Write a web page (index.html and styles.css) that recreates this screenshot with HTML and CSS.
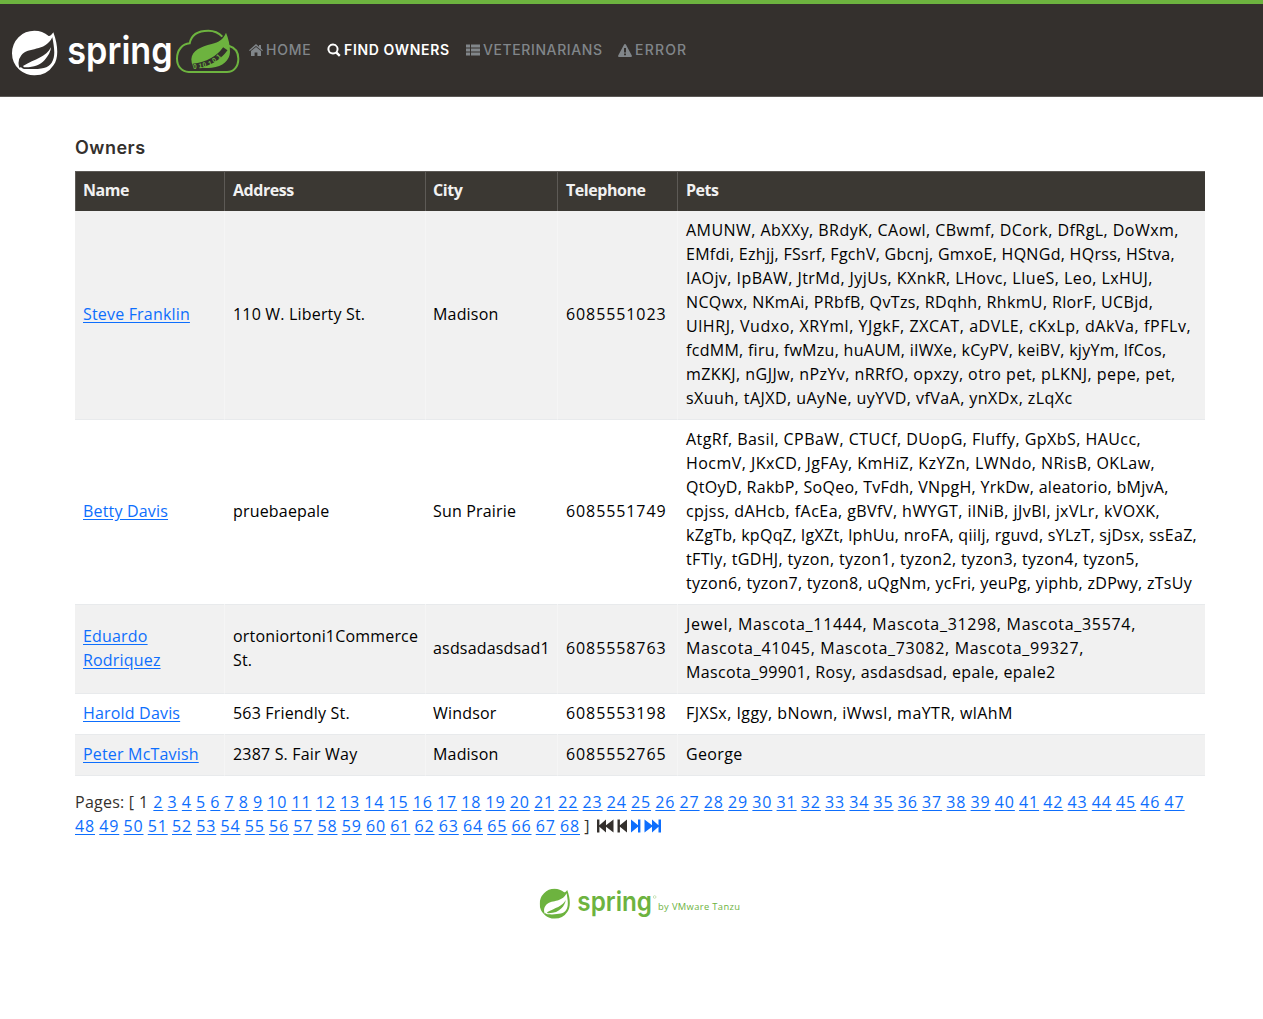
FILE: index.html
```html
<!DOCTYPE html>
<html lang="en">
<head>
<meta charset="utf-8">
<title>PetClinic :: a Spring Framework demonstration</title>
<link rel="stylesheet" href="styles.css">
</head>
<body>
<svg class="defs" aria-hidden="true">
  <symbol id="leaf" viewBox="0 0 138 138">
    <path fill-rule="evenodd" d="M124 7C119 14 114 19 110 18A67 67 0 0 0 67 2A67 67 0 0 0 0 69A67 67 0 0 0 20 117L24 121A67 67 0 0 0 67 136A68 68 0 0 0 125 105C139 86 140 50 124 7ZM121 22C126 50 132 78 119 98C107 117 80 118 36 117L31 115Q27 110 22 113Q15 92 28 76C49 49 98 68 121 22ZM117 52C103 82 70 86 33 108L36 112C64 113 84 105 98 90C109 78 116 65 117 52Z"/>
  </symbol>
</svg>
<nav class="navbar">
  <a class="brand" href="#">
    <svg width="229" height="50" viewBox="36 84 687 150">
      <use href="#leaf" x="36" y="90" width="138" height="138" fill="#fff"/>
      <text class="wordmark" x="202" y="191" font-size="114" textLength="316" lengthAdjust="spacingAndGlyphs" fill="#fff">spring</text>
      <path d="M686 137C704 142 715 156 715 176C715 200 701 216 681 216H566C546 216 531 199 531 176C531 150 547 132 569 130C574 103 596 92 625 92C646 92 657 99 667 110" fill="none" stroke="#6db33f" stroke-width="6"/>
      <path d="M678 98C669 119 657 126 635 132C603 140 576 151 574 178Q574 188 579 199Q607 207 635 203C669 200 689 181 690 156Q690 126 678 98Z" fill="#6db33f"/>
      <path d="M579 199Q645 190 676 146" fill="none" stroke="#34302d" stroke-width="16"/>
      <g class="bits" fill="#6db33f"><text x="579" y="206">0</text><text x="596" y="205" transform="rotate(-5 596 205)">1</text><text x="609" y="202" transform="rotate(-12 609 202)">0</text><text x="627" y="198" transform="rotate(-18 627 198)">1</text><text x="642" y="189" transform="rotate(-34 642 189)">0</text><text x="656" y="178" transform="rotate(-42 656 178)">1</text></g>
    </svg>
  </a>
  <ul class="menu">
    <li><a href="#"><svg width="14" height="12" viewBox="0 0 14 12"><path d="M7 0 10 2.7V1h2v3.5L14 6.2l-.8.9L7 1.9.8 7.1 0 6.2ZM7 3l5 4.1V12H8.4V8.500H5.600V12H2V7.100Z"/></svg><span class="n-home">HOME</span></a></li>
    <li><a href="#" class="active"><svg width="14" height="14" viewBox="0 0 14 14"><path fill-rule="evenodd" d="M6 .5a5.500 5.500 0 0 1 4.600 8.500l3 3-1.600 1.700-3.200-3A5.500 5.500 0 1 1 6 .5ZM6 2.400a3.600 3.600 0 1 0 0 7.200 3.600 3.600 0 0 0 0-7.200Z"/></svg><span class="n-find">FIND OWNERS</span></a></li>
    <li><a href="#"><svg width="14" height="12" viewBox="0 0 14 12"><path d="M0 .5h4v3H0Zm5 0h9v3H5ZM0 4.500h4v3H0Zm5 0h9v3H5ZM0 8.500h4v3H0Zm5 0h9v3H5Z"/></svg><span class="n-vets">VETERINARIANS</span></a></li>
    <li><a href="#"><svg width="14" height="13" viewBox="0 0 14 13"><path fill-rule="evenodd" d="M7 0q.6 0 .9.6L13.800 11.600q.4 1.400-.8 1.400H1Q-.2 13 .2 11.600L6.100.6Q6.400 0 7 0ZM6 4v4.500h2V4ZM6 9.500v1.800h2V9.500Z"/></svg><span class="n-error">ERROR</span></a></li>
  </ul>
</nav>
<main class="container">
  <h2>Owners</h2>
  <table class="owners">
    <colgroup><col class="c-name"><col class="c-address"><col class="c-city"><col class="c-phone"><col></colgroup>
    <thead><tr><th>Name</th><th>Address</th><th>City</th><th>Telephone</th><th>Pets</th></tr></thead>
    <tbody>
      <tr><td><a href="#">Steve Franklin</a></td><td>110 W. Liberty St.</td><td>Madison</td><td class="num">6085551023</td><td class="pets"><span class="m">AMUNW, AbXXy, BRdyK, CAowl, CBwmf, DCork, DfRgL, DoWxm,</span><br><span class="s">EMfdi, Ezhjj, FSsrf, FgchV, Gbcnj, GmxoE, HQNGd, HQrss, HStva,</span><br><span class="m">IAOjv, IpBAW, JtrMd, JyjUs, KXnkR, LHovc, LIueS, Leo, LxHUJ,</span><br>NCQwx, NKmAi, PRbfB, QvTzs, RDqhh, RhkmU, RlorF, UCBjd,<br><span class="l">UlHRJ, Vudxo, XRYml, YJgkF, ZXCAT, aDVLE, cKxLp, dAkVa, fPFLv,</span><br><span class="s">fcdMM, firu, fwMzu, huAUM, iIWXe, kCyPV, keiBV, kjyYm, lfCos,</span><br><span class="m">mZKKJ, nGJJw, nPzYv, nRRfO, opxzy, otro pet, pLKNJ, pepe, pet,</span><br><span class="m">sXuuh, tAJXD, uAyNe, uyYVD, vfVaA, ynXDx, zLqXc</span></td></tr>
      <tr><td><a href="#">Betty Davis</a></td><td>pruebaepale</td><td>Sun Prairie</td><td class="num">6085551749</td><td class="pets"><span class="m">AtgRf, Basil, CPBaW, CTUCf, DUopG, Fluffy, GpXbS, HAUcc,</span><br><span class="m">HocmV, JKxCD, JgFAy, KmHiZ, KzYZn, LWNdo, NRisB, OKLaw,</span><br><span class="s">QtOyD, RakbP, SoQeo, TvFdh, VNpgH, YrkDw, aleatorio, bMjvA,</span><br><span class="m">cpjss, dAHcb, fAcEa, gBVfV, hWYGT, ilNiB, jJvBl, jxVLr, kVOXK,</span><br><span class="s">kZgTb, kpQqZ, lgXZt, lphUu, nroFA, qiilj, rguvd, sYLzT, sjDsx, ssEaZ,</span><br>tFTly, tGDHJ, tyzon, tyzon1, tyzon2, tyzon3, tyzon4, tyzon5,<br><span class="s">tyzon6, tyzon7, tyzon8, uQgNm, ycFri, yeuPg, yiphb, zDPwy, zTsUy</span></td></tr>
      <tr><td><a href="#">Eduardo<br>Rodriquez</a></td><td>ortoniortoni1Commerce<br>St.</td><td>asdsadasdsad1</td><td class="num">6085558763</td><td class="pets"><span class="x">Jewel, Mascota_11444, Mascota_31298, Mascota_35574,</span><br><span class="x">Mascota_41045, Mascota_73082, Mascota_99327,</span><br>Mascota_99901, Rosy, asdasdsad, epale, epale2</td></tr>
      <tr><td><a href="#">Harold Davis</a></td><td class="m">563 Friendly St.</td><td>Windsor</td><td class="num">6085553198</td><td class="pets"><span class="m">FJXSx, Iggy, bNown, iWwsI, maYTR, wlAhM</span></td></tr>
      <tr><td><a href="#">Peter McTavish</a></td><td>2387 S. Fair Way</td><td>Madison</td><td class="num">6085552765</td><td class="pets">George</td></tr>
    </tbody>
  </table>
  <div class="pages"><span class="label">Pages:</span> [ 1 <a href="#">2</a> <a href="#">3</a> <a href="#">4</a> <a href="#">5</a> <a href="#">6</a> <a href="#">7</a> <a href="#">8</a> <a href="#">9</a> <a href="#">10</a> <a href="#">11</a> <a href="#">12</a> <a href="#">13</a> <a href="#">14</a> <a href="#">15</a> <a href="#">16</a> <a href="#">17</a> <a href="#">18</a> <a href="#">19</a> <a href="#">20</a> <a href="#">21</a> <a href="#">22</a> <a href="#">23</a> <a href="#">24</a> <a href="#">25</a> <a href="#">26</a> <a href="#">27</a> <a href="#">28</a> <a href="#">29</a> <a href="#">30</a> <a href="#">31</a> <a href="#">32</a> <a href="#">33</a> <a href="#">34</a> <a href="#">35</a> <a href="#">36</a> <a href="#">37</a> <a href="#">38</a> <a href="#">39</a> <a href="#">40</a> <a href="#">41</a> <a href="#">42</a> <a href="#">43</a> <a href="#">44</a> <a href="#">45</a> <a href="#">46</a> <a href="#">47</a><br><a href="#">48</a> <a href="#">49</a> <a href="#">50</a> <a href="#">51</a> <a href="#">52</a> <a href="#">53</a> <a href="#">54</a> <a href="#">55</a> <a href="#">56</a> <a href="#">57</a> <a href="#">58</a> <a href="#">59</a> <a href="#">60</a> <a href="#">61</a> <a href="#">62</a> <a href="#">63</a> <a href="#">64</a> <a href="#">65</a> <a href="#">66</a> <a href="#">67</a> <a href="#">68</a> ]<svg class="steps" width="64" height="14" viewBox="0 0 64 14"><path fill="#34302d" d="M0 .5h2.400v5.700L9 .5v5.700L16.500 .5v13L9 7.800v5.700L2.400 7.800v5.700H0ZM20.500 .5h2.400v5.700L30 .5v13L22.900 7.800v5.700H20.500Z"/><path fill="#0d6efd" d="M34 .5 41 6.200V.5h2.400v13H41V7.800L34 13.500ZM47.500 .5 55 6.200V.5L61.500 6.200V.5H64v13H61.500V7.800L55 13.500V7.800L47.500 13.500Z"/></svg></div>
  <footer>
    <svg width="204" height="34" viewBox="0 0 612 102">
      <use href="#leaf" x="2" y="4" width="92" height="92" fill="#6db33f"/>
      <text class="wordmark" x="115" y="72" font-size="81" textLength="224" lengthAdjust="spacingAndGlyphs" fill="#6db33f">spring</text>
      <circle cx="347" cy="30" r="4" fill="none" stroke="#6db33f"/>
      <text class="byline" x="357" y="69" font-size="28" textLength="246" fill="#6db33f">by VMware Tanzu</text>
    </svg>
  </footer>
</main>
</body>
</html>
```
FILE: styles.css
```css
* { box-sizing: border-box; }
body {
  margin: 0;
  background: #fff;
  color: #34302d;
  font: 16px/24px "Open Sans", "Noto Sans", sans-serif;
}
a { color: #0d6efd; text-underline-offset: 2px; }
.defs { position: absolute; width: 0; height: 0; }

.navbar {
  display: flex;
  align-items: flex-start;
  height: 97px;
  padding-left: 12px;
  border-top: 4px solid #6db33f;
  border-bottom: 1px solid #5b5855;
  background: #34302d;
}
.brand { display: block; height: 50px; margin-top: 24px; }
.brand svg, footer svg { display: block; overflow: visible; }
.wordmark { font-family: Inter, sans-serif; font-weight: 600; }
.bits { font: 700 20px "Liberation Sans", sans-serif; }
.byline { font-family: "Open Sans", sans-serif; }
.menu {
  display: flex;
  margin: 34px 0 0 8px;
  padding: 0;
  list-style: none;
}
.menu a {
  display: flex;
  align-items: center;
  gap: 3px;
  color: #81868a;
  fill: currentColor;
  font: 500 14px/24px Inter, sans-serif;
  text-decoration: none;
  white-space: nowrap;
}
.menu a.active { color: #fff; font-weight: 600; }
.n-home { width: 61px; letter-spacing: .8px; }
.n-find { width: 122px; letter-spacing: .65px; }
.n-vets { width: 135px; letter-spacing: .6px; }
.n-error { width: 54px; letter-spacing: 1.2px; }

.container { width: 1130px; margin: 0 auto 0 75px; }
h2 { margin: 40px 0 12px; font: 600 18px/22px Inter, sans-serif; letter-spacing: .5px; }

.owners {
  width: 1130px;
  table-layout: fixed;
  border-collapse: separate;
  border-spacing: 0;
  color: #000;
}
.c-name { width: 149px; }
.c-address { width: 201px; }
.c-city { width: 132px; }
.c-phone { width: 120px; }
.owners th, .owners td { padding: 7px 8px 9px; text-align: left; vertical-align: middle; white-space: nowrap; }
.owners th {
  height: 40px;
  padding: 5px 8px 9px 7px;
  border-top: 1px solid #5d5a56;
  border-left: 1px solid #5d5a56;
  background: #3b3833;
  color: #f1f1f1;
  font-weight: 700;
  letter-spacing: -.45px;
}
.owners th + th { padding-left: 8px; }
.owners td { border-bottom: 1px solid #e8eaec; letter-spacing: .18px; }
.owners tbody tr:nth-child(odd) td { background: #f1f1f1; }
.owners td + td { border-left: 1px solid #f5f5f5; }
.owners tbody tr:nth-child(even) td + td { border-left-color: #fff; }
.owners th:nth-child(3), .owners td:nth-child(3) { padding-left: 7px; }
.owners .num { letter-spacing: .9px; }

.owners .pets { letter-spacing: .36px; }
.s { letter-spacing: .29px; }
.m { letter-spacing: .45px; }
.l { letter-spacing: .57px; }
.x { letter-spacing: .7px; }

.pages { margin-top: 14px; white-space: nowrap; letter-spacing: .85px; word-spacing: -.76px; }
.label { letter-spacing: .25px; }
.steps { margin-left: 7px; vertical-align: -1px; }
footer { display: flex; margin: 49px 0 0 464px; }
```
